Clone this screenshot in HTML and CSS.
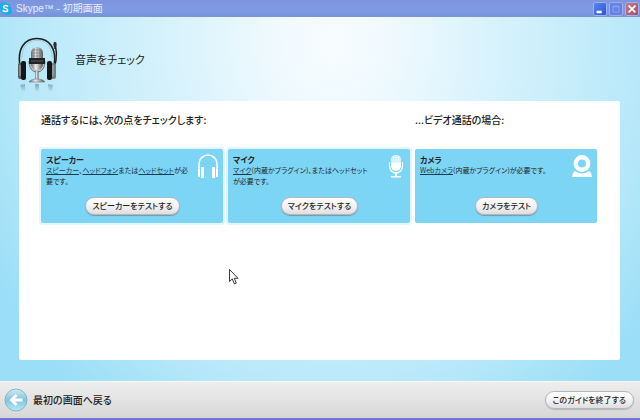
FILE: index.html
```html
<!DOCTYPE html>
<html lang="ja">
<head>
<meta charset="utf-8">
<title>Skype™ - 初期画面</title>
<link rel="stylesheet" href="styles.css">
</head>
<body>
<header class="titlebar">
  <svg class="logo" viewBox="0 0 12 14" aria-hidden="true">
    <circle cx="4" cy="4" r="4" fill="#17aef0"/><circle cx="8" cy="9" r="4" fill="#17aef0"/><circle cx="5.500" cy="6.500" r="5.500" fill="#17aef0"/>
    <path d="M7.600 4.300C6.600 3 3.500 3.100 3.500 4.900C3.500 6.700 7.700 6 7.700 8C7.700 10 4.200 10.100 3.200 8.500" fill="none" stroke="#fff" stroke-width="1.500" stroke-linecap="round"/>
  </svg>
  <span class="caption">Skype™ - 初期画面</span>
  <button class="win min" aria-label="最小化"><svg viewBox="0 0 14 14"><path d="M3 9h6v3H3z" fill="#fff"/></svg></button>
  <button class="win max" aria-label="最大化"><svg viewBox="0 0 14 14"><path d="M3.500 3.500h7v7h-7zM3.500 4.500h7" fill="none" stroke="#8ca6f4"/></svg></button>
  <button class="win close" aria-label="閉じる"><svg viewBox="0 0 14 14"><path d="M3 3l8 8M11 3l-8 8" stroke="#fff" stroke-width="2"/></svg></button>
</header>
<main class="stage">
  <div class="intro">
    <svg class="headset" viewBox="0 0 42 58" aria-hidden="true">
      <defs>
        <linearGradient id="metal"><stop offset="0" stop-color="#666"/><stop offset=".4" stop-color="#eee"/><stop offset=".6" stop-color="#bbb"/><stop offset="1" stop-color="#555"/></linearGradient>
        <linearGradient id="fade" x1="0" y1="0" x2="0" y2="1"><stop offset="0" stop-color="#567" stop-opacity=".5"/><stop offset="1" stop-color="#567" stop-opacity="0"/></linearGradient>
      </defs>
      <path d="M3 30C0 12 8 2.500 20 2.500s20 9.500 17 27.500" fill="none" stroke="#1b2023" stroke-width="1.600"/>
      <path d="M5 22C5 10 11 4.500 20 4.500s15 5.500 15 17.500" fill="none" stroke="#9fb2b8" stroke-width=".6"/>
      <path d="M38 8v5M38.500 10c2 9 1 20-5 27" fill="none" stroke="#1b2023" stroke-width="1.500"/>
      <ellipse cx="38" cy="8.500" rx="1.700" ry="2.800" fill="#2c3032"/>
      <rect x="1" y="27" width="5" height="16" rx="2" fill="#555e61"/><rect x="4" y="25" width="5" height="19" rx="2" fill="#141618"/>
      <rect x="34" y="27" width="5" height="16" rx="2" fill="#777f82"/><rect x="30" y="25" width="5" height="19" rx="2" fill="#141618"/>
      <path d="M3 29v11M36 29v11" stroke="#aab4b7"/>
      <path d="M12 25c0 7 3 11 8 11s8-4 8-11" fill="#b8bfc1" stroke="#777" stroke-width="1"/>
      <rect x="14" y="11" width="12" height="23" rx="6" fill="url(#metal)"/>
      <path d="M15 14h10M14 17h12M14 20h12M17 12v10M20 11v11M23 12v10" stroke="#777" stroke-width=".6"/>
      <path d="M12 22h16v6H12z" fill="#202325"/><path d="M14 25h12" stroke="#777" stroke-width=".7"/>
      <path d="M18.500 35h3v9h-3z" fill="url(#metal)"/>
      <path d="M12 46c1-2 4-3 8-3s7 1 8 3z" fill="url(#metal)" stroke="#666" stroke-width=".5"/>
      <path d="M3 49l5-1v8H5zM31 48l5 1-1 7h-3zM18 48h4v8h-4z" fill="url(#fade)"/>
    </svg>
    <h1>音声をチェック</h1>
  </div>
  <section class="panel">
    <div class="grid heads">
      <h2 class="wide">通話するには、次の点をチェックします:</h2>
      <h2>...ビデオ通話の場合:</h2>
    </div>
    <div class="grid">
      <article class="card halo">
        <div class="info">
          <div class="copy"><h3>スピーカー</h3>
          <p><a href="#">スピーカー</a>、<a href="#">ヘッドフォン</a>または<a href="#">ヘッドセット</a>が必<br>要です。</p></div>
          <svg class="icon" viewBox="0 0 22 24" aria-hidden="true"><path d="M2 15V10a9 9 0 0 1 18 0v5" fill="none" stroke="#fff" stroke-width="1.500"/><path d="M1 15h2v8H2q-1 0-1-2zM4 13h3v11H4zM15 13h3v11h-3zM19 15h2v6q0 2-1 2h-1z" fill="#fff"/></svg>
        </div>
        <button class="pill">スピーカーをテストする</button>
      </article>
      <article class="card halo">
        <div class="info">
          <div class="copy"><h3>マイク</h3>
          <p><a href="#">マイク</a>(内蔵かプラグイン)、またはヘッドセット<br>が必要です。</p></div>
          <svg class="icon" viewBox="0 0 22 24" aria-hidden="true"><rect x="7" y="1" width="10" height="16" rx="5" fill="#fff"/><path d="M7 9V6a5 5 0 0 1 10 0v3z" fill="#c9eefd"/><path d="M8 3.500h8M7 6h10M7 8.500h10M9.500 2v7M12 1v8M14.500 2v7" stroke="#fff" stroke-width=".5"/><path d="M5.500 8v4c0 4 3 7 6.500 7s6.500-3 6.500-7V8" fill="none" stroke="#fff" stroke-width="1.200"/><path d="M11 18h2v4h4v1.500H7V22h4z" fill="#fff"/></svg>
        </div>
        <button class="pill">マイクをテストする</button>
      </article>
      <article class="card">
        <div class="info">
          <div class="copy"><h3>カメラ</h3>
          <p><a href="#">Webカメラ</a>(内蔵かプラグイン)が必要です。</p></div>
          <svg class="icon" viewBox="0 0 22 24" aria-hidden="true"><circle cx="11" cy="9.500" r="6.200" fill="none" stroke="#fff" stroke-width="4.400"/><path d="M4 17q7 5 14 0l2 2 1 4H1l1-4z" fill="#fff"/></svg>
        </div>
        <button class="pill">カメラをテスト</button>
      </article>
    </div>
  </section>
</main>
<footer class="footer">
  <button class="back">
    <svg viewBox="0 0 24 24" aria-hidden="true"><defs><linearGradient id="orb" x1="0" y1="0" x2="0" y2="1"><stop offset="0" stop-color="#d3eaf2"/><stop offset=".5" stop-color="#80c5df"/><stop offset="1" stop-color="#b5ebfa"/></linearGradient></defs><circle cx="12" cy="12" r="11" fill="url(#orb)" stroke="#8fb4c1"/><path d="M5.500 12l6-6 2 2-2.500 2.500h7.500v3H11l2.500 2.500-2 2z" fill="#fff"/></svg>
    最初の画面へ戻る
  </button>
  <button class="pill">このガイドを終了する</button>
</footer>
<svg class="cursor" viewBox="0 0 10 16" aria-hidden="true"><path d="M.5.500v12l2.800-2.600 2 5 2-.8-2-4.800h3.700z" fill="#fff" stroke="#222" stroke-width=".9"/></svg>
</body>
</html>
```

FILE: styles.css
```css
* { box-sizing: border-box; }
body {
  margin: 0;
  min-height: 100vh;
  display: flex;
  flex-direction: column;
  font-family: "Noto Sans CJK JP", sans-serif;
  font-feature-settings: "palt";
  color: #222;
}
h1, h2, h3, p { margin: 0; font-weight: 400; }
button { font: inherit; font-feature-settings: inherit; color: inherit; padding: 0; border: 0; }
svg { display: block; }

.titlebar {
  display: flex;
  align-items: center;
  gap: 2px;
  height: 17px;
  padding-right: 1px;
  background: linear-gradient(#7c94dc, #7f9be4 60%, #7794df 85%, #8193c8);
}
.logo { width: 12px; height: 14px; }
.caption {
  flex: 1;
  padding-left: 2px;
  font-size: 10px;
  line-height: 16px;
  font-family: "Liberation Sans", "Noto Sans CJK JP", sans-serif;
  color: #e7eeff;
}
.win { width: 14px; height: 14px; border: 1px solid #9bb0f0; border-radius: 2px; background: #6582e2; }
.win svg { width: 12px; height: 12px; }
.min { background: linear-gradient(135deg, #5b85ec, #2c55d4); }
.close { background: linear-gradient(135deg, #c07b91, #b04d62); }

.stage {
  flex: 1;
  display: flex;
  flex-direction: column;
  padding: 0 20px 21px 19px;
  background: radial-gradient(ellipse 62% 125% at 52% 7%, #f7fcff 0%, #f0fafe 14%, #d6f2fc 42%, #b7e8f9 78%, #9adef7 100%);
}
.intro { display: flex; align-items: center; gap: 16px; height: 84px; }
.headset { flex: none; width: 42px; height: 58px; margin: 12px 0 0 -2px; }
h1 { font-size: 11px; line-height: 16px; }
.panel { flex: 1; padding: 10px 23px 20px 22px; border-radius: 2px; background: #fff; }
.grid { display: grid; grid-template-columns: repeat(3, minmax(0, 1fr)); gap: 5px; }
.heads { margin-bottom: 20px; }
h2 { font-size: 10px; line-height: 18px; font-weight: 500; }
.wide { grid-column: span 2; }
.card {
  display: flex;
  flex-direction: column;
  align-items: center;
  justify-content: space-between;
  height: 74px;
  padding: 5px 4px 8px 5px;
  border-radius: 2px;
  background: #7dd5f6;
}
.halo { box-shadow: 0 0 0 2px #e3f5fd; }
.info { display: flex; justify-content: space-between; align-self: stretch; }
.copy { font-size: 7px; line-height: 11px; white-space: nowrap; }
h3 { font-size: 8px; font-weight: 700; }
a { color: #173c50; text-decoration: underline; }
.icon { flex: none; width: 22px; height: 24px; }
.pill {
  height: 18px;
  padding: 0 6px;
  border: 1px solid #b2b8bc;
  border-radius: 9px;
  background: linear-gradient(#fff, #f0f0f2 60%, #dedee1);
  box-shadow: 0 1px 1px #7897a4;
  font-size: 8px;
  line-height: 16px;
  font-weight: 500;
}

.footer {
  display: flex;
  align-items: center;
  justify-content: space-between;
  height: 39px;
  padding: 0 6px 0 4px;
  border-top: 1px solid #f7f9fa;
  border-bottom: 2px solid #7179cd;
  background: linear-gradient(#eeeeef, #d7d7d7);
}
.back { display: flex; align-items: center; gap: 5px; background: none; font-size: 10px; line-height: 16px; font-weight: 500; }
.back svg { width: 24px; height: 24px; }
.footer .pill { padding: 0 7px; box-shadow: 0 1px 1px #b7b7b7; }
.cursor { position: absolute; left: 229px; top: 269px; width: 10px; height: 16px; }
```
